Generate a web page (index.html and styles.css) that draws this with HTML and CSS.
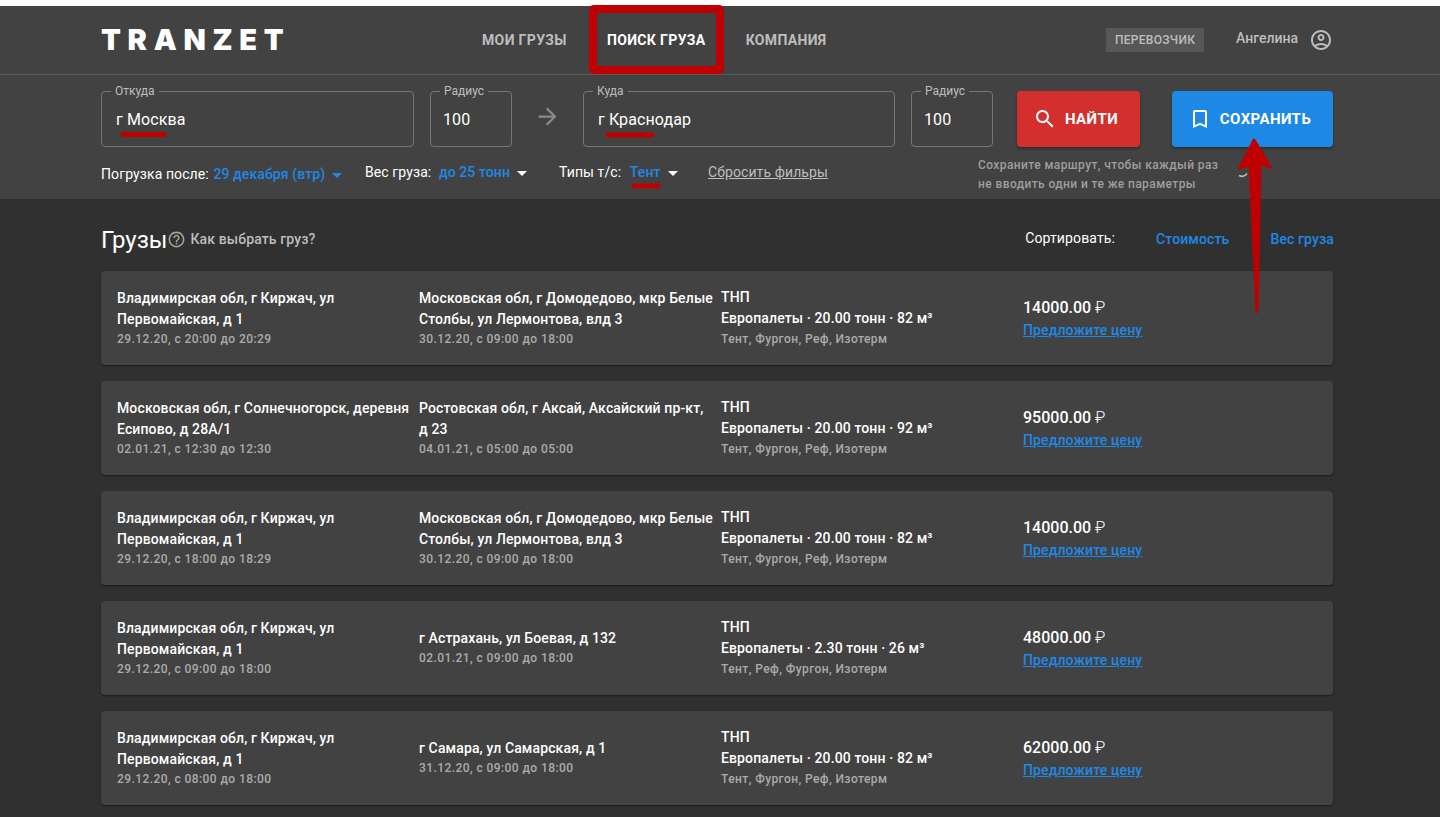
FILE: index.html
```html
<!DOCTYPE html>
<html lang="ru">
<head>
<meta charset="utf-8">
<title>Tranzet</title>
<link rel="stylesheet" href="styles.css">
</head>
<body>
<div class="page">
  <header class="topbar">
    <div class="logo">TRANZET</div>
    <nav class="nav">
      <a class="nav-item">Мои грузы</a>
      <a class="nav-item active">Поиск груза</a>
      <a class="nav-item">Компания</a>
    </nav>
    <div class="user">
      <span class="badge">ПЕРЕВОЗЧИК</span>
      <span class="user-name">Ангелина</span>
      <svg class="user-icon" viewBox="0 0 24 24" width="24" height="24"><path fill="currentColor" d="M12 2C6.48 2 2 6.48 2 12s4.48 10 10 10 10-4.48 10-10S17.52 2 12 2zM7.35 18.5C8.66 17.56 10.26 17 12 17s3.34.56 4.65 1.5C15.34 19.44 13.74 20 12 20s-3.34-.56-4.65-1.5zm10.79-1.38C16.45 15.8 14.32 15 12 15s-4.45.8-6.14 2.12C4.7 15.73 4 13.95 4 12c0-4.42 3.58-8 8-8s8 3.58 8 8c0 1.95-.7 3.73-1.86 5.12zM12 6c-1.93 0-3.5 1.57-3.5 3.5S10.07 13 12 13s3.5-1.57 3.5-3.5S13.93 6 12 6zm0 5c-.83 0-1.5-.67-1.5-1.5S11.17 8 12 8s1.5.67 1.5 1.5S12.83 11 12 11z"/></svg>
    </div>
  </header>

  <section class="filters">
    <div class="search-row">
      <div class="field field-city"><span class="field-label">Откуда</span><span class="field-value">г Москва</span></div>
      <div class="field field-radius"><span class="field-label">Радиус</span><span class="field-value">100</span></div>
      <svg class="route-arrow" viewBox="0 0 24 24" width="27" height="27"><path fill="currentColor" d="M12 4l-1.41 1.41L16.17 11H4v2h12.17l-5.58 5.59L12 20l8-8z"/></svg>
      <div class="field field-city field-to"><span class="field-label">Куда</span><span class="field-value">г Краснодар</span></div>
      <div class="field field-radius"><span class="field-label">Радиус</span><span class="field-value">100</span></div>
      <button class="btn btn-find">
        <svg viewBox="0 0 24 24" width="24" height="24"><path fill="currentColor" d="M15.5 14h-.79l-.28-.27C15.41 12.59 16 11.11 16 9.5 16 5.91 13.09 3 9.5 3S3 5.91 3 9.5 5.91 16 9.5 16c1.61 0 3.09-.59 4.23-1.57l.27.28v.79l5 4.99L20.49 19l-4.99-5zm-6 0C7.01 14 5 11.99 5 9.5S7.01 5 9.5 5 14 7.01 14 9.5 11.99 14 9.5 14z"/></svg>
        НАЙТИ
      </button>
      <button class="btn btn-save">
        <svg viewBox="0 0 24 24" width="24" height="24"><path fill="currentColor" d="M17 3H7c-1.1 0-2 .9-2 2v16l7-3 7 3V5c0-1.1-.9-2-2-2zm0 15l-5-2.18L7 18V5h10v13z"/></svg>
        СОХРАНИТЬ
      </button>
    </div>
    <div class="filter-row">
      <div class="filter filter-date">Погрузка после: <span class="accent">29 декабря (втр)</span><i class="caret caret-blue"></i></div>
      <div class="filter filter-weight">Вес груза: <span class="accent">до 25 тонн</span><i class="caret"></i></div>
      <div class="filter filter-type">Типы т/с: <span class="accent">Тент</span><i class="caret"></i></div>
      <a class="reset">Сбросить фильры</a>
      <p class="tip">Сохраните маршрут, чтобы каждый раз<br>не вводить одни и те же параметры</p>
    </div>
  </section>

  <main class="content">
    <div class="list-head">
      <h1 class="title">Грузы</h1>
      <svg class="help-icon" viewBox="0 0 24 24" width="19" height="19"><path fill="currentColor" d="M11 18h2v-2h-2v2zm1-16C6.48 2 2 6.48 2 12s4.48 10 10 10 10-4.48 10-10S17.52 2 12 2zm0 18c-4.41 0-8-3.59-8-8s3.59-8 8-8 8 3.59 8 8-3.59 8-8 8zm0-14c-2.21 0-4 1.79-4 4h2c0-1.1.9-2 2-2s2 .9 2 2c0 2-3 1.75-3 5h2c0-2.25 3-2.5 3-5 0-2.21-1.79-4-4-4z"/></svg>
      <span class="help-text">Как выбрать груз?</span>
      <div class="sort">
        <span class="sort-label">Сортировать:</span>
        <a class="sort-link">Стоимость</a>
        <a class="sort-link">Вес груза</a>
      </div>
    </div>

    <article class="card">
      <div class="col place"><div class="addr">Владимирская обл, г Киржач, ул Первомайская, д 1</div><div class="meta">29.12.20, с 20:00 до 20:29</div></div>
      <div class="col place"><div class="addr">Московская обл, г Домодедово, мкр Белые Столбы, ул Лермонтова, влд 3</div><div class="meta">30.12.20, с 09:00 до 18:00</div></div>
      <div class="col"><div class="addr">ТНП</div><div class="addr">Европалеты · 20.00 тонн · 82 м³</div><div class="meta">Тент, Фургон, Реф, Изотерм</div></div>
      <div class="col"><div class="price">14000.00 <span class="rub">₽</span></div><a class="offer">Предложите цену</a></div>
    </article>

    <article class="card">
      <div class="col place"><div class="addr">Московская обл, г Солнечногорск, деревня Есипово, д 28А/1</div><div class="meta">02.01.21, с 12:30 до 12:30</div></div>
      <div class="col place"><div class="addr">Ростовская обл, г Аксай, Аксайский пр-кт, д&nbsp;23</div><div class="meta">04.01.21, с 05:00 до 05:00</div></div>
      <div class="col"><div class="addr">ТНП</div><div class="addr">Европалеты · 20.00 тонн · 92 м³</div><div class="meta">Тент, Фургон, Реф, Изотерм</div></div>
      <div class="col"><div class="price">95000.00 <span class="rub">₽</span></div><a class="offer">Предложите цену</a></div>
    </article>

    <article class="card">
      <div class="col place"><div class="addr">Владимирская обл, г Киржач, ул Первомайская, д 1</div><div class="meta">29.12.20, с 18:00 до 18:29</div></div>
      <div class="col place"><div class="addr">Московская обл, г Домодедово, мкр Белые Столбы, ул Лермонтова, влд 3</div><div class="meta">30.12.20, с 09:00 до 18:00</div></div>
      <div class="col"><div class="addr">ТНП</div><div class="addr">Европалеты · 20.00 тонн · 82 м³</div><div class="meta">Тент, Фургон, Реф, Изотерм</div></div>
      <div class="col"><div class="price">14000.00 <span class="rub">₽</span></div><a class="offer">Предложите цену</a></div>
    </article>

    <article class="card">
      <div class="col place"><div class="addr">Владимирская обл, г Киржач, ул Первомайская, д 1</div><div class="meta">29.12.20, с 09:00 до 18:00</div></div>
      <div class="col place"><div class="addr">г Астрахань, ул Боевая, д 132</div><div class="meta">02.01.21, с 09:00 до 18:00</div></div>
      <div class="col"><div class="addr">ТНП</div><div class="addr">Европалеты · 2.30 тонн · 26 м³</div><div class="meta">Тент, Реф, Фургон, Изотерм</div></div>
      <div class="col"><div class="price">48000.00 <span class="rub">₽</span></div><a class="offer">Предложите цену</a></div>
    </article>

    <article class="card">
      <div class="col place"><div class="addr">Владимирская обл, г Киржач, ул Первомайская, д 1</div><div class="meta">29.12.20, с 08:00 до 18:00</div></div>
      <div class="col place"><div class="addr">г Самара, ул Самарская, д 1</div><div class="meta">31.12.20, с 09:00 до 18:00</div></div>
      <div class="col"><div class="addr">ТНП</div><div class="addr">Европалеты · 20.00 тонн · 82 м³</div><div class="meta">Тент, Фургон, Реф, Изотерм</div></div>
      <div class="col"><div class="price">62000.00 <span class="rub">₽</span></div><a class="offer">Предложите цену</a></div>
    </article>
  </main>

  <svg class="annotations" viewBox="0 0 1440 817" width="1440" height="817" aria-hidden="true">
    <path class="spinner" d="M1239 175.500c3 1.500 6 1 8-2"/>
    <rect class="mark-box" x="593" y="9" width="127" height="61" rx="1"/>
    <line class="mark-line" x1="123" y1="134.500" x2="164" y2="134.500"/>
    <line class="mark-line" x1="608" y1="135" x2="652" y2="135"/>
    <line class="mark-line" x1="634" y1="186" x2="658" y2="186"/>
    <path class="mark-arrow" d="M1254 140L1270 167L1260 163L1257 312L1250 164L1240 168Z"/>
  </svg>
</div>
</body>
</html>
```

FILE: styles.css
```css
* { box-sizing: border-box; }

html, body {
  margin: 0;
  height: 100%;
  overflow: hidden;
  background: #303030;
}

body {
  font-family: Roboto, "Noto Sans", sans-serif;
  font-size: 14px;
  color: #fff;
}

.page {
  position: relative;
  width: 1440px;
  height: 817px;
  padding-top: 6px;
  background: linear-gradient(#fff 6px, #303030 6px);
  overflow: hidden;
}

/* top bar */
.topbar {
  display: flex;
  align-items: center;
  height: 69px;
  padding: 0 107px 0 101px;
  background: #424242;
  border-bottom: 1px solid #5a5a5a;
}

.logo {
  width: 381px;
  font-family: Inter, Roboto, sans-serif;
  font-size: 29px;
  font-weight: 900;
  letter-spacing: 6.7px;
  line-height: 1;
  color: #fff;
  position: relative;
  top: -1px;
}

.nav {
  display: flex;
  gap: 40px;
}

.nav-item {
  font-size: 14px;
  font-weight: 700;
  text-transform: uppercase;
  letter-spacing: 0.36px;
  color: #bdbdbd;
}

.nav-item.active { color: #fff; }

.user {
  display: flex;
  align-items: center;
  margin-left: auto;
  color: #bdbdbd;
}

.badge {
  display: flex;
  align-items: center;
  justify-content: center;
  width: 98px;
  height: 24px;
  background: #575757;
  font-size: 12px;
  font-weight: 500;
  letter-spacing: 0.3px;
}

.user-name {
  margin-left: 32px;
  font-size: 14px;
  font-weight: 500;
  position: relative;
  top: -2px;
}

.user-icon { margin-left: 11px; }

/* filter panel */
.filters {
  height: 124px;
  padding: 16px 107px 0 101px;
  background: #424242;
}

.search-row {
  display: flex;
  align-items: flex-start;
}

.field {
  position: relative;
  display: flex;
  align-items: center;
  height: 56px;
  padding: 0 14px;
  border: 1px solid #757575;
  border-radius: 4px;
}

.field-city { width: 313px; }
.field-radius { width: 82px; margin-left: 16px; padding: 0 12px; }
.field-to { width: 312px; }

.field-label {
  position: absolute;
  top: -8px;
  left: 9px;
  padding: 0 4px;
  background: #424242;
  font-size: 12px;
  line-height: 14px;
  color: #bdbdbd;
}

.field-value {
  font-size: 16px;
  letter-spacing: 0.1px;
}

.route-arrow {
  flex: none;
  margin: 12px 22px 0 22px;
  color: #8a8a8a;
}

.btn {
  display: flex;
  align-items: center;
  justify-content: center;
  height: 56px;
  border: 0;
  padding: 0 6px 0 0;
  border-radius: 4px;
  font-family: inherit;
  font-size: 15px;
  font-weight: 700;
  letter-spacing: 0.4px;
  color: #fff;
  box-shadow: 0 2px 3px rgba(0, 0, 0, 0.3);
}

.btn svg { margin-right: 8px; }
.btn-find { width: 123px; margin-left: 24px; background: #d32f2f; }
.btn-save { width: 161px; margin-left: 32px; background: #1e88e5; }

.filter-row {
  display: flex;
  align-items: center;
  height: 38px;
  margin-top: 6px;
  letter-spacing: 0.1px;
}

.filter {
  display: flex;
  align-items: center;
  white-space: pre;
  color: #fff;
}

.filter-date { width: 264px; position: relative; top: 2px; }
.filter-weight { width: 194px; }
.filter-type { width: 149px; }

.accent {
  color: #1e88e5;
  font-weight: 500;
  margin-left: 1px;
}

.filter-weight .accent { margin-left: 4px; }
.filter-type .accent { margin-left: 5px; }

.caret {
  width: 0;
  height: 0;
  margin-left: 7px;
  border-left: 5px solid transparent;
  border-right: 5px solid transparent;
  border-top: 5px solid #fff;
  position: relative;
  top: 1px;
}

.caret-blue { border-top-color: #1e88e5; }

.reset {
  color: #bdbdbd;
  text-decoration: underline;
}

.tip {
  margin: 6px 0 0 auto;
  width: 355px;
  font-size: 12px;
  font-weight: 500;
  line-height: 19px;
  color: #9e9e9e;
  letter-spacing: 0.4px;
}

/* list */
.content {
  width: 1232px;
  margin-left: 101px;
}

.list-head {
  display: flex;
  align-items: center;
  height: 72px;
  padding-top: 8px;
  color: #bdbdbd;
}

.title {
  margin: 2px 0 0;
  font-size: 24px;
  font-weight: 400;
  color: #fff;
}

.help-icon { margin-left: 0; color: #a0a0a0; }

.help-text {
  margin-left: 4px;
  font-size: 14px;
  font-weight: 500;
  letter-spacing: 0.13px;
}

.sort {
  display: flex;
  align-items: center;
  margin-left: auto;
  margin-right: -1px;
  letter-spacing: 0.13px;
}

.sort-label { color: #fff; margin-bottom: 2px; }

.sort-link {
  font-weight: 500;
  color: #1e88e5;
  margin-left: 41px;
}

.card {
  display: grid;
  grid-template-columns: 302px 302px 302px 1fr;
  align-items: center;
  height: 94px;
  margin-bottom: 16px;
  padding: 0 16px;
  background: #424242;
  border-radius: 4px;
  box-shadow: 0 1px 2px rgba(0, 0, 0, 0.45);
}

.col { padding-right: 6px; }

.addr {
  font-size: 14px;
  font-weight: 500;
  line-height: 21px;
  letter-spacing: 0.13px;
}

.meta {
  font-size: 12px;
  font-weight: 500;
  line-height: 20px;
  letter-spacing: 0.42px;
  color: #ababab;
}

.place .meta { margin-top: -1px; }

.price {
  padding-top: 1px;
  font-size: 16px;
  font-weight: 500;
  line-height: 24px;
}

.rub { font-weight: 300; }

.offer {
  display: block;
  font-size: 14px;
  font-weight: 500;
  line-height: 21px;
  letter-spacing: 0.13px;
  color: #1e88e5;
  text-decoration: underline;
}

/* red annotations laid over the page */
.annotations {
  position: absolute;
  top: 0;
  left: 0;
  pointer-events: none;
}

.spinner { fill: none; stroke: #bdbdbd; stroke-width: 1.500; }
.mark-box { fill: none; stroke: #c00000; stroke-width: 8; }
.mark-line { stroke: #c00000; stroke-width: 5; stroke-linecap: round; }
.mark-arrow { fill: #c00000; stroke: #c00000; stroke-width: 3; stroke-linejoin: round; }
```
